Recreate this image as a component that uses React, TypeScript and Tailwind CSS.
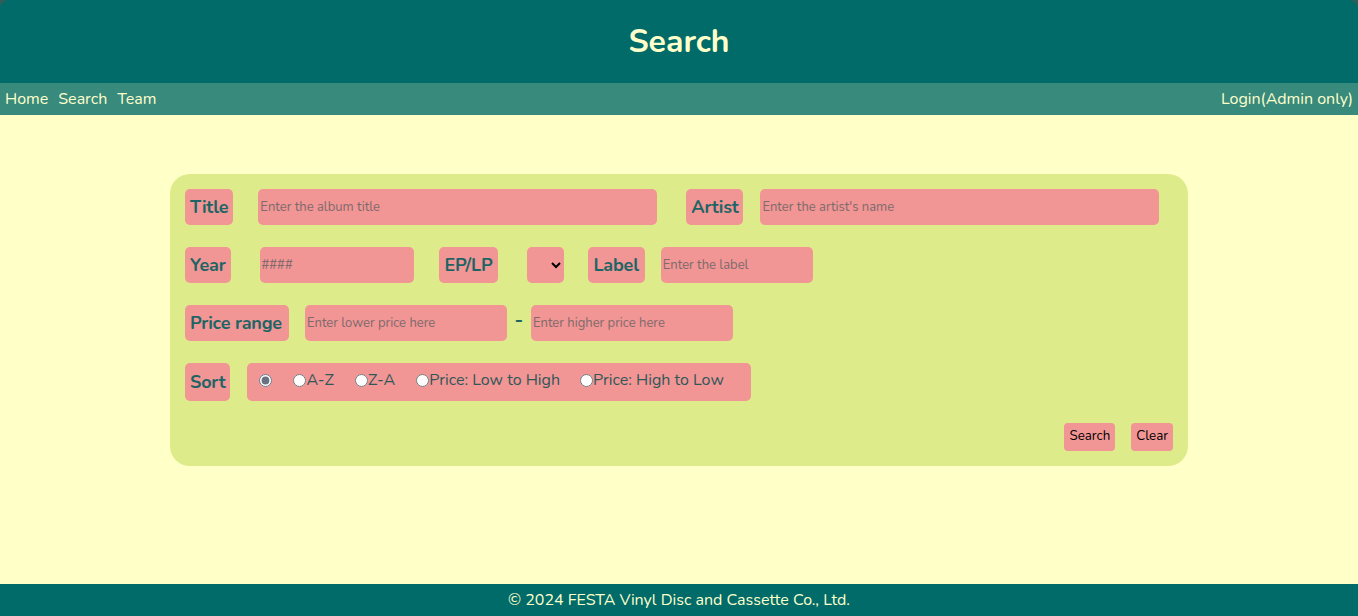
import { useState } from 'react';

const font = { fontFamily: 'Nunito, Lato, "Open Sans", sans-serif' };

function Tag({ children, className = 'px-[5px]' }: { children: React.ReactNode; className?: string }) {
  return (
    <span
      className={`flex items-center h-[36px] rounded-[5px] bg-[#f29595] text-[18px] font-bold tracking-[-0.2px] text-[#1d6565] ${className}`}
    >
      {children}
    </span>
  );
}

function Field({ placeholder, className = '' }: { placeholder: string; className?: string }) {
  return (
    <input
      placeholder={placeholder}
      className={`h-[36px] rounded-[5px] bg-[#f29595] px-[2px] text-[13px] text-[#333] placeholder:text-[#7d6b6b] outline-none ${className}`}
    />
  );
}

export default function App() {
  const [sort, setSort] = useState('');

  const options = [
    { v: '', t: '', ml: 'ml-[12px]' },
    { v: 'az', t: 'A-Z', ml: 'ml-[21px]' },
    { v: 'za', t: 'Z-A', ml: 'ml-[21px]' },
    { v: 'lh', t: 'Price: Low to High', ml: 'ml-[21px]' },
    { v: 'hl', t: 'Price: High to Low', ml: 'ml-[20px]' },
  ];

  return (
    <div className="h-screen flex flex-col bg-[#ffffc8]" style={font}>
      {/* Header */}
      <div className="bg-[#2f5f5b]">
        <header className="h-[83px] flex items-center justify-center rounded-t-[9px] bg-[#006b69]">
          <h1 className="text-[32px] font-bold text-[#ffffcc]">Search</h1>
        </header>
      </div>
      <nav className="h-[32px] flex items-center justify-between px-[5px] bg-[#388a7c] text-[16px] text-[#ffffcc]">
        <div className="flex gap-[10px]">
          <a>Home</a>
          <a>Search</a>
          <a>Team</a>
        </div>
        <a>Login(Admin only)</a>
      </nav>

      {/* Form */}
      <main className="flex-1 pt-[59px]">
        <form className="w-[1018px] mx-auto rounded-[20px] bg-[#deeb8a] pt-[15px] px-[15px] pb-[15px]">
          <div className="flex items-center">
            <Tag>Title</Tag>
            <Field placeholder="Enter the album title" className="ml-[25px] w-[399px]" />
            <Tag className="ml-[29px] px-[5px]">Artist</Tag>
            <Field placeholder="Enter the artist's name" className="ml-[17px] w-[399px]" />
          </div>

          <div className="flex items-center mt-[22px]">
            <Tag>Year</Tag>
            <Field placeholder="####" className="ml-[29px] w-[154px]" />
            <Tag className="ml-[25px] px-[6px]">EP/LP</Tag>
            <select className="ml-[29px] h-[36px] w-[37px] rounded-[5px] bg-[#f29595] text-[13px] outline-none">
              <option></option>
              <option>EP</option>
              <option>LP</option>
            </select>
            <Tag className="ml-[24px] pl-[5px] pr-[6px]">Label</Tag>
            <Field placeholder="Enter the label" className="ml-[16px] w-[152px]" />
          </div>

          <div className="flex items-center mt-[22px]">
            <Tag className="pl-[5px] pr-[7px]">Price range</Tag>
            <Field placeholder="Enter lower price here" className="ml-[16px] w-[202px]" />
            <span className="w-[24px] text-center text-[20px] font-bold text-[#1d6565] -mt-[6px]">-</span>
            <Field placeholder="Enter higher price here" className="w-[202px]" />
          </div>

          <div className="flex items-center mt-[22px]">
            <Tag className="h-[38px] px-[5px]">Sort</Tag>
            <div className="ml-[17px] w-[504px] h-[38px] flex items-center rounded-[5px] bg-[#f29595] text-[16px] text-[#2f5858] pb-[4px]">
              {options.map(o => (
                <label key={o.v} className={`flex items-center ${o.ml}`}>
                  <input
                    type="radio"
                    name="sort"
                    checked={sort === o.v}
                    onChange={() => setSort(o.v)}
                    className="m-0 w-[13px] h-[13px] accent-gray-500"
                  />
                  {o.t && <span>{o.t}</span>}
                </label>
              ))}
            </div>
          </div>

          <div className="flex justify-end gap-[16px] mt-[22px]">
            <button type="button" className="h-[28px] px-[5px] rounded-[4px] bg-[#f29595] text-[13.33px] text-black">
              Search
            </button>
            <button type="button" className="h-[28px] px-[5px] rounded-[4px] bg-[#f29595] text-[13.33px] text-black">
              Clear
            </button>
          </div>
        </form>
      </main>

      <footer className="h-[32px] flex items-center justify-center bg-[#006b69] text-[16px] text-[#ffffcc]">
        © 2024 FESTA Vinyl Disc and Cassette Co., Ltd.
      </footer>
    </div>
  );
}
